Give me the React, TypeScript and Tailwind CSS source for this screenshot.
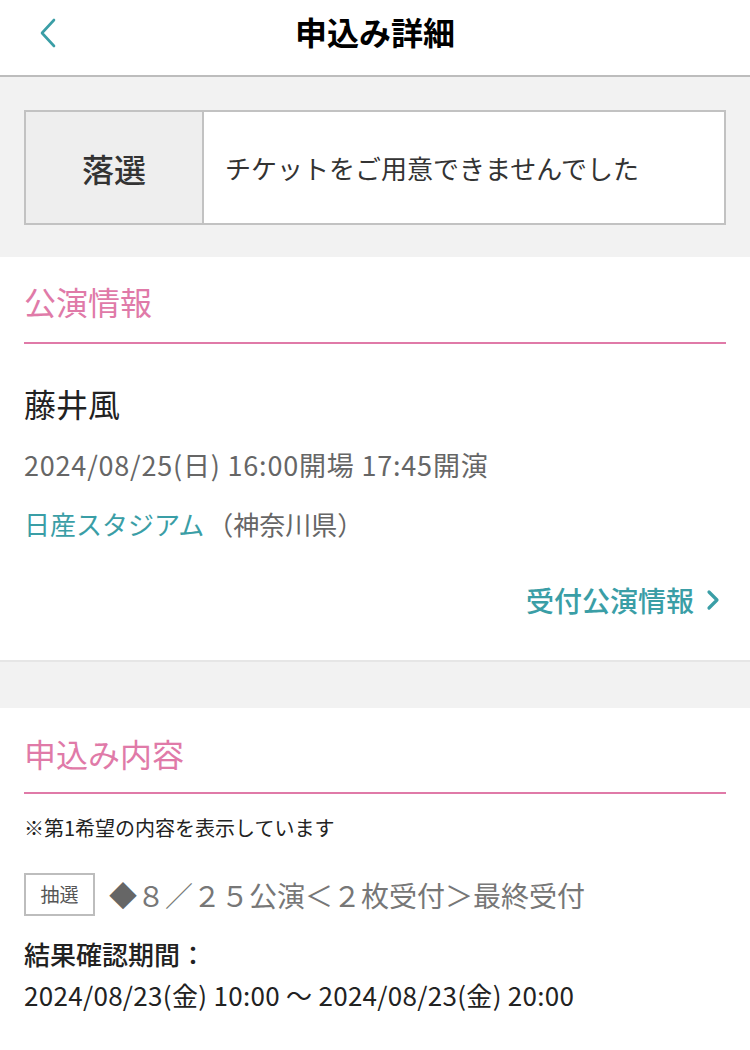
export default function App() {
  return (
    <div
      className="w-[750px] min-h-[1050px] bg-white text-[#222]"
      style={{ fontFamily: '"Noto Sans CJK JP", "Noto Sans", sans-serif' }}
    >
      {/* header */}
      <header className="relative flex h-[77px] items-center justify-center border-b-2 border-[#bdbdbd] bg-white pb-[13px]">
        <button className="absolute left-[38px] top-[18px]" aria-label="戻る">
          <svg width="20" height="30" viewBox="0 0 20 30" fill="none">
            <path d="M16 2L4 15l12 13" stroke="#3a9ea6" strokeWidth="2.6" strokeLinecap="round" strokeLinejoin="round" />
          </svg>
        </button>
        <h1 className="text-[32px] font-bold leading-[40px] text-black">申込み詳細</h1>
      </header>

      {/* status */}
      <div className="bg-[#f2f2f2] px-6 pb-[32px] pt-[33px]">
        <div className="flex h-[115px] border-2 border-[#c2c2c2] bg-white">
          <div className="flex w-[178px] items-center justify-center border-r-2 border-[#c2c2c2] bg-[#eeeeee] text-[32px] font-medium text-[#333]">
            落選
          </div>
          <div className="flex flex-1 items-center pl-[21px] text-[26px] text-[#333]">
            チケットをご用意できませんでした
          </div>
        </div>
      </div>

      {/* 公演情報 */}
      <section className="border-b-2 border-[#e6e6e6] bg-white px-6 pb-[42px] pt-[24px]">
        <h2 className="border-b-2 border-[#e07aa8] pb-[21px] text-[32px] leading-[40px] text-[#e07aa8]">公演情報</h2>
        <p className="mt-[39px] text-[32px] leading-[40px] text-[#222]">藤井風</p>
        <p className="mt-[24px] text-[27px] leading-[36px] tracking-[0.8px] text-[#666]">2024/08/25(日) 16:00開場 17:45開演</p>
        <p className="mt-[23px] text-[26px] leading-[36px]">
          <span className="text-[#3a9ea6]">日産スタジアム</span>
          <span className="ml-[3px] text-[#666]">（神奈川県）</span>
        </p>
        <div className="mt-[40px] flex justify-end">
          <a className="flex items-center gap-[12px] pr-[6px] text-[28px] font-medium leading-[36px] text-[#3a9ea6]">
            受付公演情報
            <svg width="14" height="22" viewBox="0 0 14 22" fill="none">
              <path d="M3 3l8 8-8 8" stroke="#3a9ea6" strokeWidth="3.2" strokeLinecap="round" strokeLinejoin="round" />
            </svg>
          </a>
        </div>
      </section>

      <div className="h-[46px] bg-[#f2f2f2]" />

      {/* 申込み内容 */}
      <section className="bg-white px-6 pb-[40px] pt-[25px]">
        <h2 className="border-b-2 border-[#e07aa8] pb-[19px] text-[32px] leading-[40px] text-[#e07aa8]">申込み内容</h2>
        <p className="mt-[20px] text-[20px] leading-[28px] text-[#222]">※第1希望の内容を表示しています</p>
        <div className="mt-[31px] flex items-center gap-[14px]">
          <span className="flex h-[43px] w-[71px] items-center justify-center border-2 border-[#bdbdbd] text-[19px] text-[#555]">
            抽選
          </span>
          <span className="text-[28px] leading-[40px] text-[#777]">
            <span className="text-[#666]">◆</span>８／２５公演＜２枚受付＞最終受付
          </span>
        </div>
        <p className="mt-[20px] text-[26px] font-medium leading-[36px] text-[#222]">結果確認期間：</p>
        <p className="mt-[5px] text-[26px] leading-[36px] tracking-[0.3px] text-[#222]">2024/08/23(金) 10:00 〜 2024/08/23(金) 20:00</p>
      </section>
    </div>
  );
}
